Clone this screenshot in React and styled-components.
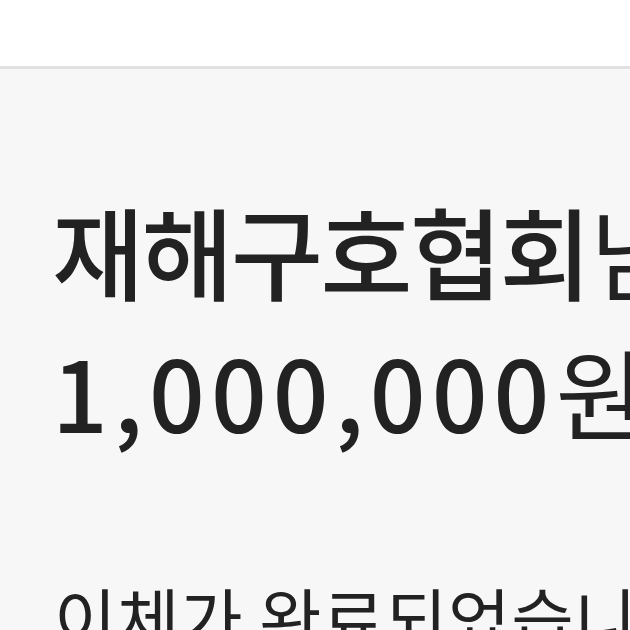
import React from "react";
import styled, { createGlobalStyle } from "styled-components";

const GlobalStyle = createGlobalStyle`
  html, body {
    margin: 0;
    padding: 0;
    background: #f7f7f7;
    overflow: hidden;
  }
  body {
    font-family: "Noto Sans CJK KR", "Noto Sans", sans-serif;
    color: #222;
  }
`;

const Page = styled.div`
  width: 630px;
  height: 630px;
  overflow: hidden;
  background: #f7f7f7;
`;

const Header = styled.header`
  height: 66px;
  background: #fff;
  border-bottom: 3px solid #e1e1e1;
`;

const Content = styled.main`
  padding: 111px 0 0 52px;
  white-space: nowrap;
`;

const Title = styled.h1`
  margin: 0;
  font-weight: 500;
`;

const Line = styled.div`
  font-size: ${(p) => p.$size}px;
  letter-spacing: ${(p) => p.$spacing}px;
  line-height: 140px;
`;

const Light = styled.span`
  font-weight: 400;
`;

const Message = styled.p`
  margin: 117px 0 0 2px;
  font-size: 68px;
  line-height: 80px;
  font-weight: 400;
  letter-spacing: 0.5px;
`;

export default function App() {
  return (
    <Page>
      <GlobalStyle />
      <Header />
      <Content>
        <Title>
          <Line $size={100} $spacing={-2.5}>
            재해구호협회<Light>님에게</Light>
          </Line>
          <Line $size={98} $spacing={6}>
            1,000,000<Light>원</Light>
          </Line>
        </Title>
        <Message>이체가 완료되었습니다</Message>
      </Content>
    </Page>
  );
}
